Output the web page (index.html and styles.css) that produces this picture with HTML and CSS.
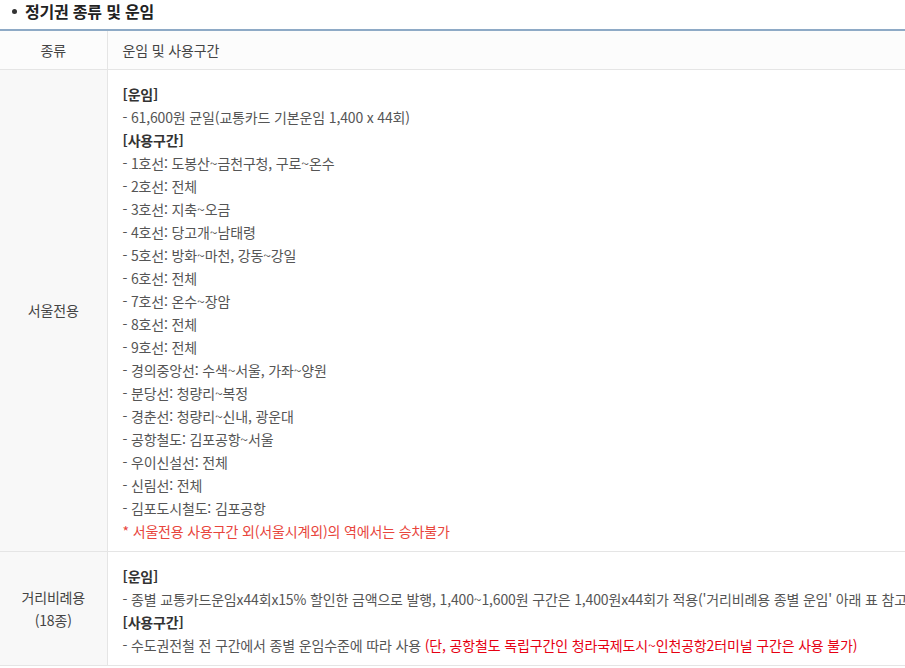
FILE: index.html
```html
<!DOCTYPE html>
<html lang="ko">
<head>
    <meta charset="UTF-8">
    <meta name="viewport" content="width=device-width, initial-scale=1.0">
    <title>정기권 종류 및 운임</title>
    <link rel="stylesheet" href="styles.css">
</head>
<body>
    <h3 class="sec-title">정기권 종류 및 운임</h3>

    <table class="fare-table">
        <colgroup>
            <col class="col-type">
            <col>
        </colgroup>
        <thead>
            <tr>
                <th>종류</th>
                <th class="left">운임 및 사용구간</th>
            </tr>
        </thead>
        <tbody>
            <tr>
                <th>서울전용</th>
                <td>
                    <p class="sub">[운임]</p>
                    <p>- 61,600원 균일(교통카드 기본운임 1,400 x 44회)</p>
                    <p class="sub">[사용구간]</p>
                    <p>- 1호선: 도봉산~금천구청, 구로~온수</p>
                    <p>- 2호선: 전체</p>
                    <p>- 3호선: 지축~오금</p>
                    <p>- 4호선: 당고개~남태령</p>
                    <p>- 5호선: 방화~마천, 강동~강일</p>
                    <p>- 6호선: 전체</p>
                    <p>- 7호선: 온수~장암</p>
                    <p>- 8호선: 전체</p>
                    <p>- 9호선: 전체</p>
                    <p>- 경의중앙선: 수색~서울, 가좌~양원</p>
                    <p>- 분당선: 청량리~복정</p>
                    <p>- 경춘선: 청량리~신내, 광운대</p>
                    <p>- 공항철도: 김포공항~서울</p>
                    <p>- 우이신설선: 전체</p>
                    <p>- 신림선: 전체</p>
                    <p>- 김포도시철도: 김포공항</p>
                    <p class="note">* 서울전용 사용구간 외(서울시계외)의 역에서는 승차불가</p>
                </td>
            </tr>
            <tr>
                <th>거리비례용<br>(18종)</th>
                <td>
                    <p class="sub">[운임]</p>
                    <p>- 종별 교통카드운임x44회x15% 할인한 금액으로 발행, 1,400~1,600원 구간은 1,400원x44회가 적용('거리비례용 종별 운임' 아래 표 참고)</p>
                    <p class="sub">[사용구간]</p>
                    <p>- 수도권전철 전 구간에서 종별 운임수준에 따라 사용 <span class="warn">(단, 공항철도 독립구간인 청라국제도시~인천공항2터미널 구간은 사용 불가)</span></p>
                </td>
            </tr>
        </tbody>
    </table>
</body>
</html>
```

FILE: styles.css
```css
/* 정기권 안내 */
body {
    font-family: "Noto Sans CJK KR", "Noto Sans", sans-serif;
    margin: 0;
    padding: 0;
    background-color: #fff;
    color: #555;
    overflow-x: hidden;
}
.sec-title {
    position: relative;
    margin: 0;
    padding: 0 0 7px 25px;
    font-size: 16px;
    line-height: 22px;
    font-weight: bold;
    color: #222;
    letter-spacing: -0.2px;
}
.sec-title::before {
    content: "";
    position: absolute;
    left: 12px;
    top: 9px;
    width: 5px;
    height: 5px;
    border-radius: 50%;
    background-color: #333;
}
.fare-table {
    table-layout: fixed;
    width: 980px;
    border-collapse: collapse;
    border-top: 2px solid #8eaac6;
    font-size: 14px;
    line-height: 23px;
    letter-spacing: -0.15px;
}
.col-type {
    width: 107px;
}
.fare-table th,
.fare-table td {
    border-bottom: 1px solid #e5e5e5;
    border-left: 1px solid #e5e5e5;
    font-weight: normal;
    vertical-align: middle;
}
.fare-table th:first-child {
    border-left: none;
}
.fare-table thead th {
    height: 38px;
    padding: 0 15px;
    background-color: #fcfcfc;
    text-align: center;
    color: #444;
}
.fare-table thead th.left {
    text-align: left;
}
.fare-table tbody th {
    padding: 0;
    background-color: #f8f8f8;
    text-align: center;
    color: #444;
}
.fare-table tbody td {
    padding: 13px 15px 8px;
    white-space: nowrap;
    color: #555;
}
.fare-table p {
    margin: 0;
}
.fare-table .sub {
    font-weight: bold;
    color: #333;
}
.fare-table .note {
    color: #e8453c;
}
.warn {
    color: #e60012;
}
```
